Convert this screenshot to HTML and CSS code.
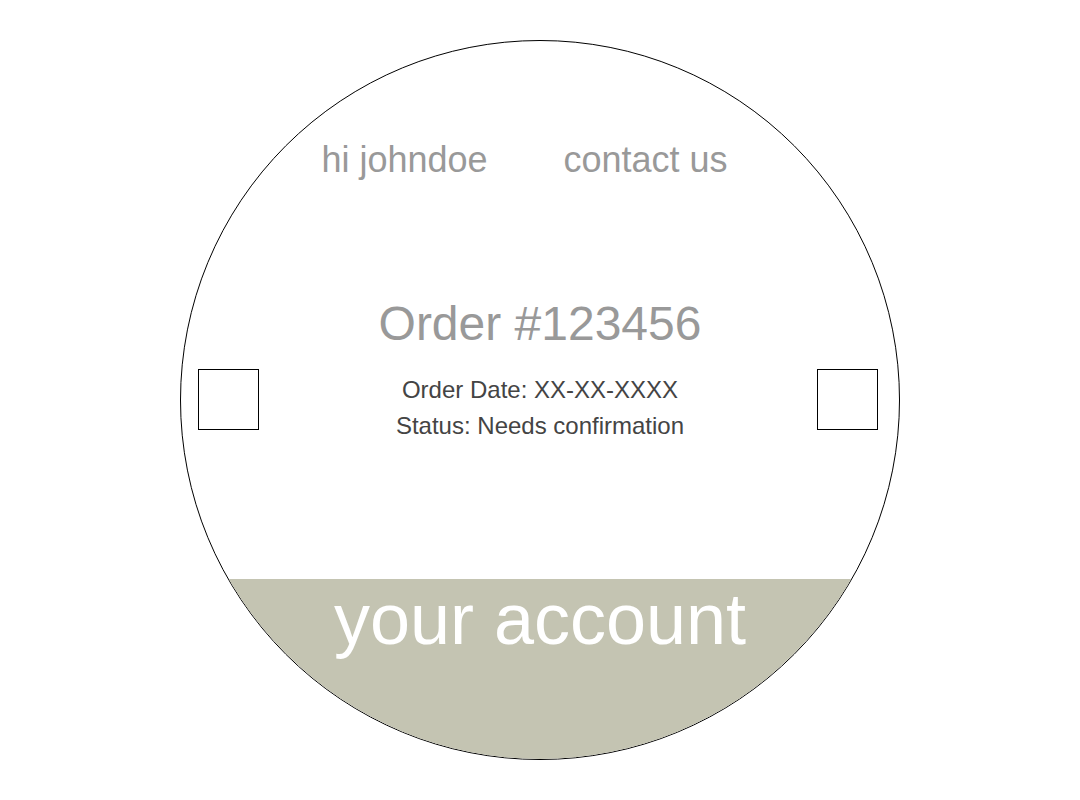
FILE: index.html
```html
<!DOCTYPE html>
<html lang="en">
<head>
<meta charset="utf-8">
<title>Order</title>
<link rel="stylesheet" href="styles.css">
</head>
<body>
<div class="page">
  <div class="watch">
    <nav class="nav">
      <span class="nav-item">hi johndoe</span>
      <span class="nav-item">contact us</span>
    </nav>
    <div class="middle">
      <div class="square square-left"></div>
      <div class="order">
        <h1 class="order-title">Order #123456</h1>
        <p class="order-line">Order Date: XX-XX-XXXX</p>
        <p class="order-line">Status: Needs confirmation</p>
      </div>
      <div class="square square-right"></div>
    </div>
    <div class="band">
      <span class="band-text">your account</span>
    </div>
  </div>
</div>
</body>
</html>
```

FILE: styles.css
```css
* { box-sizing: border-box; }

html, body {
  margin: 0;
  padding: 0;
  background: #ffffff;
}

body {
  font-family: "Liberation Sans", Arial, sans-serif;
}

.page {
  width: 1080px;
  height: 800px;
  padding-top: 40px;
  display: flex;
  justify-content: center;
  align-items: flex-start;
}

.watch {
  width: 720px;
  height: 720px;
  border: 1px solid #000;
  border-radius: 50%;
  overflow: hidden;
  display: flex;
  flex-direction: column;
  background: #fff;
}

.nav {
  display: flex;
  justify-content: center;
  gap: 76px;
  padding-top: 99px;
  padding-right: 31px;
  font-size: 36px;
  line-height: 40px;
  color: #999999;
}

.middle {
  display: flex;
  align-items: flex-start;
  margin-top: 116px;
  padding-left: 17px;
  padding-right: 21px;
}

.square {
  width: 61px;
  height: 61px;
  border: 1px solid #000;
  flex: none;
  align-self: flex-end;
  margin-bottom: 14px;
}

.order {
  flex: 1;
  padding-left: 4px;
  text-align: center;
}

.order-title {
  margin: 0 0 20px;
  font-size: 48px;
  line-height: 56px;
  font-weight: normal;
  color: #999999;
}

.order-line {
  margin: 0;
  font-size: 24px;
  line-height: 36px;
  color: #444444;
}

.band {
  margin-top: auto;
  height: 180px;
  background: #c4c4b2;
  padding-top: 4px;
  text-align: center;
}

.band-text {
  font-size: 72px;
  line-height: 72px;
  color: #ffffff;
}
```
